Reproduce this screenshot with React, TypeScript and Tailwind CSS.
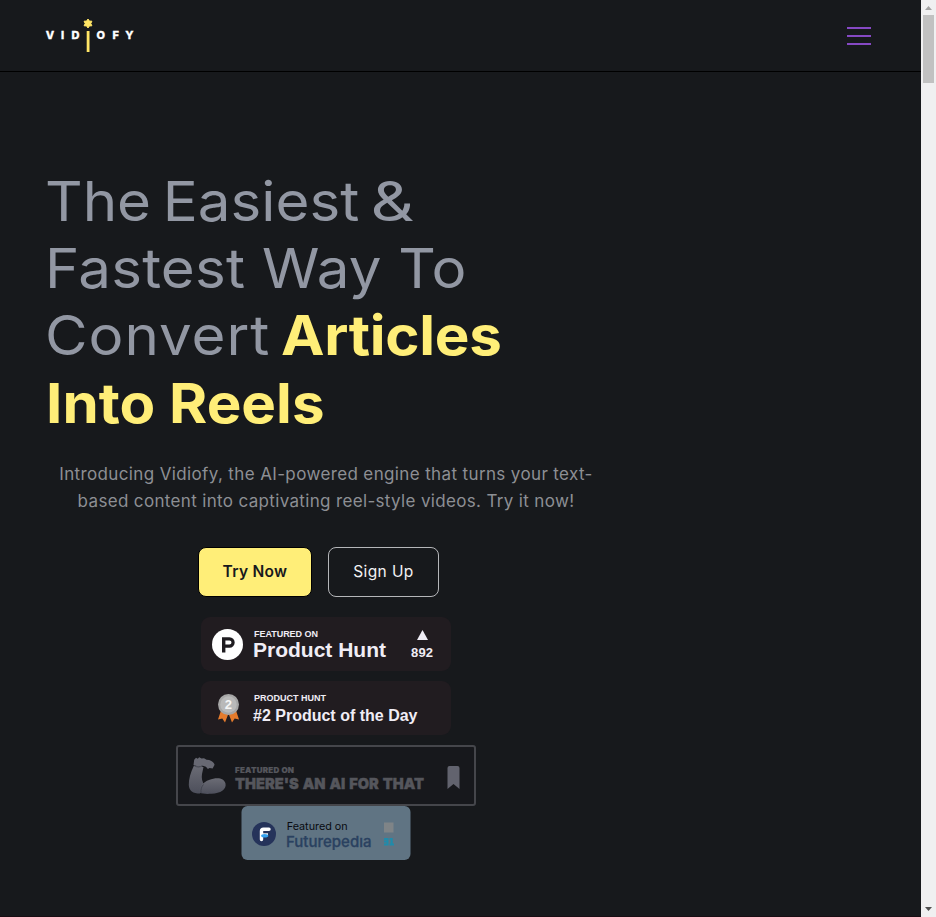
import React from "react";

function Logo() {
  return (
    <svg width="92" height="36" viewBox="0 0 92 36" className="block" aria-label="Vidiofy">
      <g fill="#fff" stroke="#fff" strokeWidth="0.3" fontFamily="Inter, 'Liberation Sans', sans-serif" fontWeight="800" fontSize="11">
        <text y="21.3" x="0.8 16 26.600">VID</text>
        <text y="21.3" x="51.600 67.500 80.300">OFY</text>
      </g>
      <path d="M43 1l1.400 2.100 2.500.1-1.100 2.300 1.100 2.300-2.500.1L43 10l-1.400-2.100-2.500-.1 1.100-2.300-1.100-2.300 2.500-.1z" fill="#ffe566" stroke="#ffe566" />
      <rect x="41.700" y="13" width="2.800" height="21" fill="#ffe566" />
    </svg>
  );
}

function Header() {
  return (
    <header className="flex h-[72px] shrink-0 items-center justify-between border-b border-black pl-[45px] pr-[50px]">
      <Logo />
      <button className="flex w-6 flex-col gap-[6px]" aria-label="Menu">
        <span className="h-[2px] bg-[#8649c4]" />
        <span className="h-[2px] bg-[#8649c4]" />
        <span className="h-[2px] bg-[#8649c4]" />
      </button>
    </header>
  );
}

function ProductHuntBadge() {
  return (
    <svg width="250" height="54" viewBox="0 0 250 54" className="block" fontFamily="'Liberation Sans', Arial, sans-serif" fontWeight="bold" fill="#f0edf5">
      <rect width="250" height="54" rx="9" fill="#211c20" />
      <circle cx="26.500" cy="27.500" r="15.500" fill="#fff" />
      <path d="M21 20.300h7.500a5.200 5.200 0 0 1 0 10.400H24.400v4.800H21zM24.400 23.400v4.200h4a2.100 2.100 0 0 0 0-4.200z" fill="#1f1c20" />
      <text x="53" y="20" fontSize="9" textLength="64">FEATURED ON</text>
      <text x="52" y="40" fontSize="21" textLength="133">Product Hunt</text>
      <path d="M216 23l5.500-10 5.500 10z" />
      <text x="210" y="40" fontSize="13" textLength="22">892</text>
    </svg>
  );
}

function ProductOfTheDayBadge() {
  return (
    <svg width="250" height="54" viewBox="0 0 250 54" className="block" fontFamily="'Liberation Sans', Arial, sans-serif" fontWeight="bold" fill="#f0edf5">
      <rect width="250" height="54" rx="9" fill="#211c20" />
      <path d="M20.500 28L17 38.500l4.300-1L24 41.500l3.500-9zM34.500 28L38 38.500l-4.300-1L31 41.500l-3.500-9z" fill="#e57b2c" />
      <circle cx="27.500" cy="23.500" r="10.500" fill="#a6a6a6" />
      <circle cx="27.500" cy="23.500" r="8.200" fill="#b9b9b9" />
      <text x="23.800" y="28" fontSize="13" fill="#f5f5f5">2</text>
      <text x="53" y="20" fontSize="9" textLength="72">PRODUCT HUNT</text>
      <text x="52" y="40" fontSize="16" textLength="164.500">#2 Product of the Day</text>
    </svg>
  );
}

function AiForThatBadge() {
  return (
    <svg width="300" height="61" viewBox="0 0 300 61" className="block" fontFamily="Inter, sans-serif" fontWeight="900" fill="#55565c">
      <defs>
        <linearGradient id="arm" x1="0" y1="0" x2="0" y2="1">
          <stop offset="0" stopColor="#6b6c75" />
          <stop offset="1" stopColor="#4d4f5b" />
        </linearGradient>
      </defs>
      <rect x="1" y="1" width="298" height="59" rx="2" fill="#17181c" stroke="#45464b" strokeWidth="2" />
      <path d="M18 20.500C14.500 28 12.700 34 12.800 40 13 46 17 48.500 24 48.500L29 41c-3-4-3.700-8-3-12l1.500-7z" fill="url(#arm)" />
      <path d="M23.500 47.500c-.5-6 4-10.500 9.500-12.500 7.500-3 15-2.500 16.500 3.500 1.200 6-5 9.800-14 10.300-5 .3-9 .2-12-1.300z" fill="url(#arm)" />
      <path d="M17.500 20l.7-5.200 1.800-2 1.800 1 1.400-1.500 2.300 1.300 2.500-.4 2.600 1.600c4 0 7.200 2.200 8 5l-2 3.800-3-.6-1.700 1-2-2.300-3-1-2 1.500z" fill="#686973" />
      <path d="M18 20.500c3 2 6 2 8.500 0M27.500 39.500c-2 2-2.800 5-2.500 8.500" fill="none" stroke="#3b3d47" strokeWidth=".8" />
      <text x="59" y="28" fontSize="8" stroke="#55565c" strokeWidth=".2" textLength="59">FEATURED ON</text>
      <text x="59" y="44.400" fontSize="15.200" stroke="#55565c" strokeWidth=".4" wordSpacing="1" textLength="189" lengthAdjust="spacingAndGlyphs">THERE'S AN AI FOR THAT</text>
      <path d="M271.500 44V23q0-2 2-2h8q2 0 2 2v21l-6-5z" fill="#62636e" />
    </svg>
  );
}

function FuturepediaBadge() {
  return (
    <svg width="170" height="54" viewBox="0 0 170 54" className="block" fontFamily="Inter, sans-serif">
      <rect x=".5" width="169" height="54" rx="6" fill="#607483" />
      <circle cx="23" cy="28" r="12" fill="#25335a" />
      <path d="M20.500 33.500V25q0-1.800 2-1.800H28" fill="none" stroke="#fff" strokeWidth="3.400" strokeLinecap="round" />
      <path d="M21 28.500h6" stroke="#fff" strokeWidth="2.400" />
      <ellipse cx="23.700" cy="29.800" rx="3.600" ry="1.800" fill="#35a2ef" />
      <text x="45.700" y="24" fontSize="10.800" fill="#080b10" textLength="61">Featured on</text>
      <text x="45" y="40.500" fontSize="15" fontWeight="500" fill="#2a4160" stroke="#2a4160" strokeWidth=".3" textLength="85.500">Futurepedıa</text>
      <rect x="143" y="16.500" width="9.500" height="10" fill="#7f8487" />
      <path d="M143 32h4.500v7.500H143v-2h2.500v-1H143V34.500h2.500V34H143zM148.500 32h3.200v5.500h1.300v2h-4.500v-2h1v-3.500h-1z" fill="#1f8bab" />
    </svg>
  );
}

function Hero() {
  return (
    <main className="flex w-[605px] flex-col pl-[47px] pt-[96px]">
      <h1 className="-ml-[2px] origin-left scale-x-[1.06] whitespace-nowrap font-['Inter'] text-[55px] leading-[67.2px] text-[#9297a3]">
        <span className="block [word-spacing:-4.5px]">
          The Easiest <span className="inline-block origin-left scale-x-[1.16]">&amp;</span>
        </span>
        <span className="block tracking-[0.2px]">Fastest Way To</span>
        <span className="flex gap-[10px]">
          <span className="tracking-[0.9px]">Convert</span>
          <b className="font-bold tracking-[-0.3px] text-[#ffee78]">Articles</b>
        </span>
        <b className="ml-px block font-bold text-[#ffee78]">Into Reels</b>
      </h1>
      <p className="mt-6 whitespace-nowrap text-center font-['Inter'] text-[17px] leading-[27px] text-[#8d8f94]">
        <span className="block tracking-[0.37px]">Introducing Vidiofy, the AI-powered engine that turns your text-</span>
        <span className="block tracking-[0.34px]">based content into captivating reel-style videos. Try it now!</span>
      </p>
      <div className="mt-[32px] flex justify-center gap-4 pr-[15px] font-['Inter'] text-[15.5px]">
        <button className="h-[50px] w-[114px] rounded-lg border border-black bg-[#ffee78] font-semibold tracking-[0.3px] text-[#17181c]">Try Now</button>
        <button className="h-[50px] w-[111px] rounded-lg border border-[#b5b6b9] tracking-[0.4px] text-[#f2f2f4]">Sign Up</button>
      </div>
      <div className="mt-5 flex flex-col items-center">
        <ProductHuntBadge />
        <div className="mb-[10px] mt-[10px]">
          <ProductOfTheDayBadge />
        </div>
        <AiForThatBadge />
        <FuturepediaBadge />
      </div>
    </main>
  );
}

function Scrollbar() {
  return (
    <div className="flex w-[15px] shrink-0 flex-col items-center bg-[#f0f0f1]">
      <svg width="15" height="15" className="block shrink-0"><path d="M4 10l3.500-4 3.500 4z" fill="#a3a3a3" /></svg>
      <div className="h-[68px] w-[11px] bg-[#c1c1c1]" />
      <svg width="15" height="15" className="mt-auto block shrink-0"><path d="M4 5l3.500 4L11 5z" fill="#505050" /></svg>
    </div>
  );
}

export default function App() {
  return (
    <div className="flex h-[917px] w-[936px] overflow-hidden bg-[#17191c]">
      <div className="flex min-w-0 flex-1 flex-col border-b border-[#190d13]">
        <Header />
        <Hero />
      </div>
      <Scrollbar />
    </div>
  );
}
